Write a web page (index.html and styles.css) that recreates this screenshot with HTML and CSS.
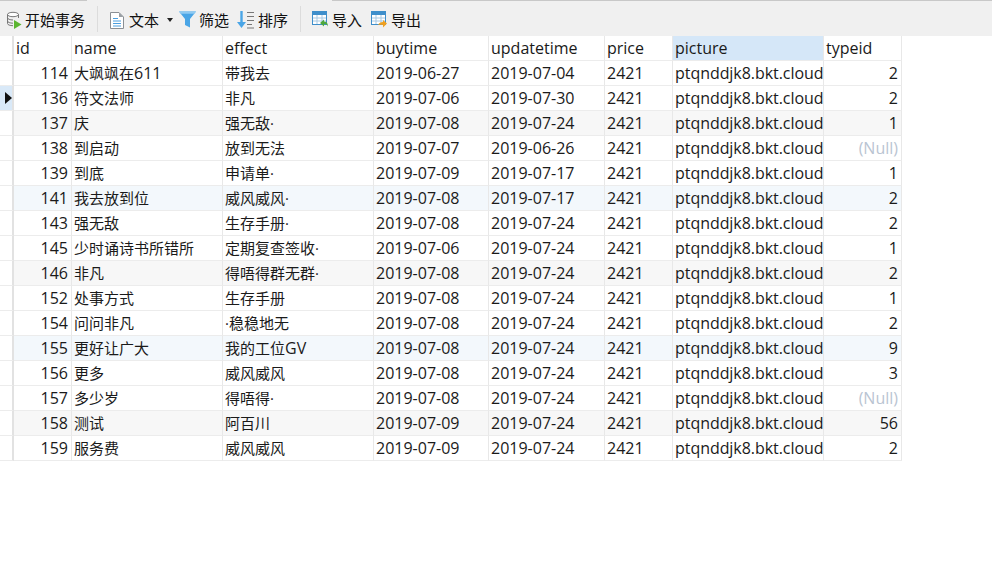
FILE: index.html
```html
<!DOCTYPE html>
<html lang="zh">
<head>
<meta charset="utf-8">
<title>数据表</title>
<link rel="stylesheet" href="styles.css">
</head>
<body>
<div class="tabline"><span class="tabline-a"></span><span class="tabline-gap"></span><span class="tabline-b"></span></div>
<div class="toolbar">
  <button class="tool tool-begin"><svg width="16" height="18" viewBox="0 0 16 18"><ellipse cx="7" cy="3.500" rx="5.500" ry="2.200" fill="#fff" stroke="#777"/><path d="M1.500 3.500v9c0 1.300 2.500 2.200 5.500 2.200M12.500 3.500v3.500M1.500 6.800c0 1.200 2.500 2.200 5.500 2.200M1.500 10c0 1.200 2.500 2.200 5.500 2.200" fill="none" stroke="#777"/><path d="M8 9l7.500 4.500L8 18z" fill="#5cb531"/></svg><span>开始事务</span></button>
  <i class="sep"></i>
  <button class="tool tool-text"><svg width="14" height="18" viewBox="0 0 14 18"><path d="M.5 1.500h8.500l4.500 4.500v11.500h-13z" fill="#fff" stroke="#8a8f94"/><path d="M9 1.500v4.500h4.500z" fill="#9aa0a5"/><path d="M3 7.500h5M3 10h8M3 12.500h8M3 15h8" stroke="#4a9fe0"/></svg><span class="label-text">文本</span><svg class="caret" width="6" height="4" viewBox="0 0 6 4"><path d="M0 0h6L3 4z" fill="#222"/></svg></button>
  <button class="tool tool-filter"><svg width="17" height="17" viewBox="0 0 17 17"><path d="M0 .5h17l-6 7.500v8.500l-5-2.500v-6z" fill="#4aa5e6"/><path d="M0 .5h17l-1.800 2.200H1.800z" fill="#8fcaf2"/></svg><span>筛选</span></button>
  <button class="tool tool-sort"><svg width="17" height="18" viewBox="0 0 17 18"><path d="M4.500 0v13" stroke="#4aa5e6" stroke-width="2.400"/><path d="M0 11h9l-4.500 6z" fill="#4aa5e6"/><path d="M10 1.500h7M10 5.500h7M10 9.500h7M10 13.500h5M10 17h7" stroke="#777" stroke-width="1.200"/></svg><span>排序</span></button>
  <i class="sep sep-wide"></i>
  <button class="tool tool-import"><svg width="16" height="17" viewBox="0 0 16 17"><rect x=".5" y=".5" width="14" height="13" fill="#fff" stroke="#3f8fcb"/><path d="M0 0h15v4H0z" fill="#3f8fcb"/><path d="M5 4v9M10 4v9M1 7h13M1 10h13" stroke="#a8c9e3"/><path d="M8 12l4-3.500v2c2.500 0 4 1.500 4 5-1-2-2-2.500-4-2.500v2.500z" fill="#4fa83d"/></svg><span>导入</span></button>
  <button class="tool tool-export"><svg width="16" height="17" viewBox="0 0 16 17"><rect x=".5" y=".5" width="14" height="13" fill="#fff" stroke="#3f8fcb"/><path d="M0 0h15v4H0z" fill="#3f8fcb"/><path d="M5 4v9M10 4v9M1 7h13M1 10h13" stroke="#a8c9e3"/><path d="M16 12.500l-4-3.500v2c-2.500 0-4 1-5 3 1.500-.5 3-.5 5 0v2.500z" fill="#f0a020"/></svg><span>导出</span></button>
</div>
<table class="grid">
  <colgroup>
    <col class="c-gutter"><col class="c-id"><col class="c-name"><col class="c-effect"><col class="c-buy"><col class="c-upd"><col class="c-price"><col class="c-pic"><col class="c-type">
  </colgroup>
  <thead>
    <tr><th class="gutter"></th><th>id</th><th>name</th><th>effect</th><th>buytime</th><th>updatetime</th><th>price</th><th class="active">picture</th><th>typeid</th></tr>
  </thead>
  <tbody>
    <tr><td class="gutter"></td><td class="num">114</td><td class="zh">大飒飒在<span class="lat">611</span></td><td class="zh">带我去</td><td>2019-06-27</td><td>2019-07-04</td><td>2421</td><td>ptqnddjk8.bkt.cloud</td><td class="num">2</td></tr>
    <tr><td class="gutter current"><svg width="7" height="12" viewBox="0 0 7 12"><path d="M0 0l7 6-7 6z" fill="#111"/></svg></td><td class="num">136</td><td class="zh">符文法师</td><td class="zh">非凡</td><td>2019-07-06</td><td>2019-07-30</td><td>2421</td><td>ptqnddjk8.bkt.cloud</td><td class="num">2</td></tr>
    <tr class="odd"><td class="gutter"></td><td class="num">137</td><td class="zh">庆</td><td class="zh">强无敌·</td><td>2019-07-08</td><td>2019-07-24</td><td>2421</td><td>ptqnddjk8.bkt.cloud</td><td class="num">1</td></tr>
    <tr><td class="gutter"></td><td class="num">138</td><td class="zh">到启动</td><td class="zh">放到无法</td><td>2019-07-07</td><td>2019-06-26</td><td>2421</td><td>ptqnddjk8.bkt.cloud</td><td class="null">(Null)</td></tr>
    <tr><td class="gutter"></td><td class="num">139</td><td class="zh">到底</td><td class="zh">申请单·</td><td>2019-07-09</td><td>2019-07-17</td><td>2421</td><td>ptqnddjk8.bkt.cloud</td><td class="num">1</td></tr>
    <tr class="tint"><td class="gutter"></td><td class="num">141</td><td class="zh">我去放到位</td><td class="zh">威风威风·</td><td>2019-07-08</td><td>2019-07-17</td><td>2421</td><td>ptqnddjk8.bkt.cloud</td><td class="num">2</td></tr>
    <tr><td class="gutter"></td><td class="num">143</td><td class="zh">强无敌</td><td class="zh">生存手册·</td><td>2019-07-08</td><td>2019-07-24</td><td>2421</td><td>ptqnddjk8.bkt.cloud</td><td class="num">2</td></tr>
    <tr><td class="gutter"></td><td class="num">145</td><td class="zh">少时诵诗书所错所</td><td class="zh">定期复查签收·</td><td>2019-07-06</td><td>2019-07-24</td><td>2421</td><td>ptqnddjk8.bkt.cloud</td><td class="num">1</td></tr>
    <tr class="odd"><td class="gutter"></td><td class="num">146</td><td class="zh">非凡</td><td class="zh">得唔得群无群·</td><td>2019-07-08</td><td>2019-07-24</td><td>2421</td><td>ptqnddjk8.bkt.cloud</td><td class="num">2</td></tr>
    <tr><td class="gutter"></td><td class="num">152</td><td class="zh">处事方式</td><td class="zh">生存手册</td><td>2019-07-08</td><td>2019-07-24</td><td>2421</td><td>ptqnddjk8.bkt.cloud</td><td class="num">1</td></tr>
    <tr><td class="gutter"></td><td class="num">154</td><td class="zh">问问非凡</td><td class="zh">·稳稳地无</td><td>2019-07-08</td><td>2019-07-24</td><td>2421</td><td>ptqnddjk8.bkt.cloud</td><td class="num">2</td></tr>
    <tr class="tint"><td class="gutter"></td><td class="num">155</td><td class="zh">更好让广大</td><td class="zh">我的工位<span class="lat">GV</span></td><td>2019-07-08</td><td>2019-07-24</td><td>2421</td><td>ptqnddjk8.bkt.cloud</td><td class="num">9</td></tr>
    <tr><td class="gutter"></td><td class="num">156</td><td class="zh">更多</td><td class="zh">威风威风</td><td>2019-07-08</td><td>2019-07-24</td><td>2421</td><td>ptqnddjk8.bkt.cloud</td><td class="num">3</td></tr>
    <tr><td class="gutter"></td><td class="num">157</td><td class="zh">多少岁</td><td class="zh">得唔得·</td><td>2019-07-08</td><td>2019-07-24</td><td>2421</td><td>ptqnddjk8.bkt.cloud</td><td class="null">(Null)</td></tr>
    <tr class="odd"><td class="gutter"></td><td class="num">158</td><td class="zh">测试</td><td class="zh">阿百川</td><td>2019-07-09</td><td>2019-07-24</td><td>2421</td><td>ptqnddjk8.bkt.cloud</td><td class="num">56</td></tr>
    <tr><td class="gutter"></td><td class="num">159</td><td class="zh">服务费</td><td class="zh">威风威风</td><td>2019-07-09</td><td>2019-07-24</td><td>2421</td><td>ptqnddjk8.bkt.cloud</td><td class="num">2</td></tr>
  </tbody>
</table>
</body>
</html>
```
FILE: styles.css
```css
html, body {
  margin: 0;
  padding: 0;
  background: #fff;
  height: 100%;
  overflow: hidden;
}
body {
  font-family: "Open Sans", "Noto Sans CJK SC", sans-serif;
  font-size: 16px;
  color: #1a1a1a;
}
.tabline {
  display: flex;
  height: 1px;
  background: #f0f0f0;
}
.tabline-a { width: 87px; background: #c8c8c8; }
.tabline-gap { width: 245px; }
.tabline-b { flex: 1; background: #c8c8c8; }
.toolbar {
  display: flex;
  align-items: center;
  height: 35px;
  background: #f0f0f0;
  padding: 2px 0 0 6px;
  box-sizing: border-box;
}
.tool {
  display: flex;
  align-items: center;
  gap: 3px;
  border: 0;
  padding: 0;
  background: none;
  font: inherit;
  font-size: 15px;
  color: #111;
  height: 24px;
}
.sep {
  display: block;
  width: 1px;
  height: 26px;
  background: #dcdcdc;
  margin: -2px 12px 0 12px;
}
.sep-wide { margin: -2px 11px 0 12px; }
.tool-text { gap: 5px; }
.tool-text .caret { margin: 1px 0 0 3px; }
.tool-filter { margin-left: 6px; }
.tool-sort { margin-left: 8px; gap: 4px; }
.tool-import, .tool-export { gap: 4px; }
.tool-export { margin-left: 9px; }
.grid {
  table-layout: fixed;
  border-collapse: separate;
  border-spacing: 0;
  width: 902px;
}
.c-gutter { width: 14px; }
.c-id { width: 58px; }
.c-name { width: 151px; }
.c-effect { width: 151px; }
.c-buy { width: 115px; }
.c-upd { width: 116px; }
.c-price { width: 68px; }
.c-pic { width: 151px; }
.c-type { width: 78px; }
th, td {
  height: 25px;
  box-sizing: border-box;
  padding: 0 2px;
  border-right: 1px solid #e8e8e8;
  border-bottom: 1px solid #ececec;
  font-weight: 400;
  text-align: left;
  white-space: nowrap;
  overflow: hidden;
  line-height: 22px;
}
td:nth-child(8) { letter-spacing: -0.05px; }
.zh { font-size: 15px; }
.lat { font-size: 16px; }
th.active { background: #d5e7f8; }
.gutter {
  padding: 0;
  border-right: 2px solid #e2e2e2;
  vertical-align: middle;
}
.gutter svg { display: block; margin-left: 5px; }
.current { background: #d9e9f8; }
.odd td { background: #f7f7f7; }
.tint td { background: #f3f8fc; }
.odd .gutter, .tint .gutter { background: #fff; }
.num { text-align: right; padding-right: 3px; }
.null { text-align: right; padding-right: 3px; color: #b9c4d2; }
```
